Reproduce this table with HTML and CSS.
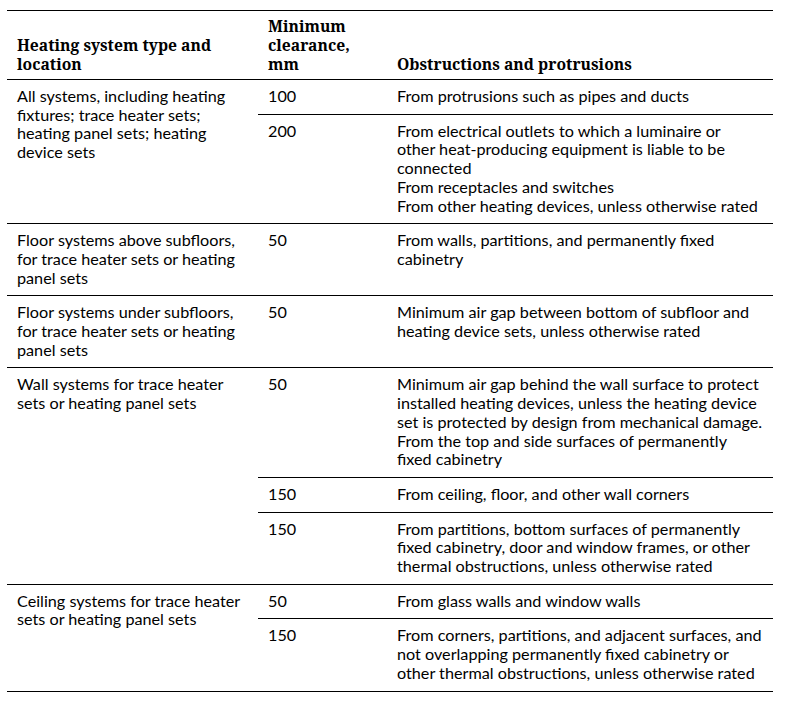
FILE: index.html
```html
<!DOCTYPE html>
<html>
<head>
<meta charset="utf-8">
<link rel="stylesheet" href="styles.css">
</head>
<body>
<table class="clearance">
  <colgroup>
    <col class="c-type">
    <col class="c-min">
    <col class="c-obs">
  </colgroup>
  <thead>
    <tr>
      <th>Heating system type and<br>location</th>
      <th>Minimum<br>clearance,<br>mm</th>
      <th>Obstructions and protrusions</th>
    </tr>
  </thead>
  <tbody>
    <tr class="group">
      <td rowspan="2">All systems, including heating<br>fixtures; trace heater sets;<br>heating panel sets; heating<br>device sets</td>
      <td>100</td>
      <td>From protrusions such as pipes and ducts</td>
    </tr>
    <tr class="sub">
      <td>200</td>
      <td>From electrical outlets to which a luminaire or<br>other heat-producing equipment is liable to be<br>connected<br>From receptacles and switches<br>From other heating devices, unless otherwise rated</td>
    </tr>
    <tr class="group">
      <td>Floor systems above subfloors,<br>for trace heater sets or heating<br>panel sets</td>
      <td>50</td>
      <td>From walls, partitions, and permanently fixed<br>cabinetry</td>
    </tr>
    <tr class="group">
      <td>Floor systems under subfloors,<br>for trace heater sets or heating<br>panel sets</td>
      <td>50</td>
      <td>Minimum air gap between bottom of subfloor and<br>heating device sets, unless otherwise rated</td>
    </tr>
    <tr class="group">
      <td rowspan="3">Wall systems for trace heater<br>sets or heating panel sets</td>
      <td>50</td>
      <td>Minimum air gap behind the wall surface to protect<br>installed heating devices, unless the heating device<br>set is protected by design from mechanical damage.<br>From the top and side surfaces of permanently<br>fixed cabinetry</td>
    </tr>
    <tr class="sub">
      <td>150</td>
      <td>From ceiling, floor, and other wall corners</td>
    </tr>
    <tr class="sub">
      <td>150</td>
      <td>From partitions, bottom surfaces of permanently<br>fixed cabinetry, door and window frames, or other<br>thermal obstructions, unless otherwise rated</td>
    </tr>
    <tr class="group">
      <td rowspan="2">Ceiling systems for trace heater<br>sets or heating panel sets</td>
      <td>50</td>
      <td>From glass walls and window walls</td>
    </tr>
    <tr class="sub last">
      <td>150</td>
      <td>From corners, partitions, and adjacent surfaces, and<br>not overlapping permanently fixed cabinetry or<br>other thermal obstructions, unless otherwise rated</td>
    </tr>
  </tbody>
</table>
</body>
</html>
```
FILE: styles.css
```css
html, body {
  margin: 0;
  padding: 0;
  background: #ffffff;
}

body {
  padding: 10px 0 0 7px;
}

.clearance {
  border-collapse: collapse;
  width: 766px;
  table-layout: fixed;
  color: #000;
}

.c-type { width: 251px; }
.c-min { width: 129px; }
.c-obs { width: 386px; }

.clearance th {
  font-family: "Noto Serif", "DejaVu Serif", serif;
  font-weight: 700;
  font-size: 15.7px;
  line-height: 19px;
  text-align: left;
  vertical-align: bottom;
  padding: 6px 4px 5px 10px;
  border-top: 1px solid #000;
  border-bottom: 1px solid #000;
  white-space: nowrap;
}

.clearance td {
  font-family: Lato, "Open Sans", sans-serif;
  font-size: 16.2px;
  line-height: 18.7px;
  vertical-align: top;
  padding: 7px 4px 8px 10px;
  white-space: nowrap;
}

.clearance tr.group td,
.clearance tr.sub td {
  border-top: 1px solid #000;
}

.clearance tr.last td,
.clearance tr.group td[rowspan] {
  border-bottom: 1px solid #000;
}
```
